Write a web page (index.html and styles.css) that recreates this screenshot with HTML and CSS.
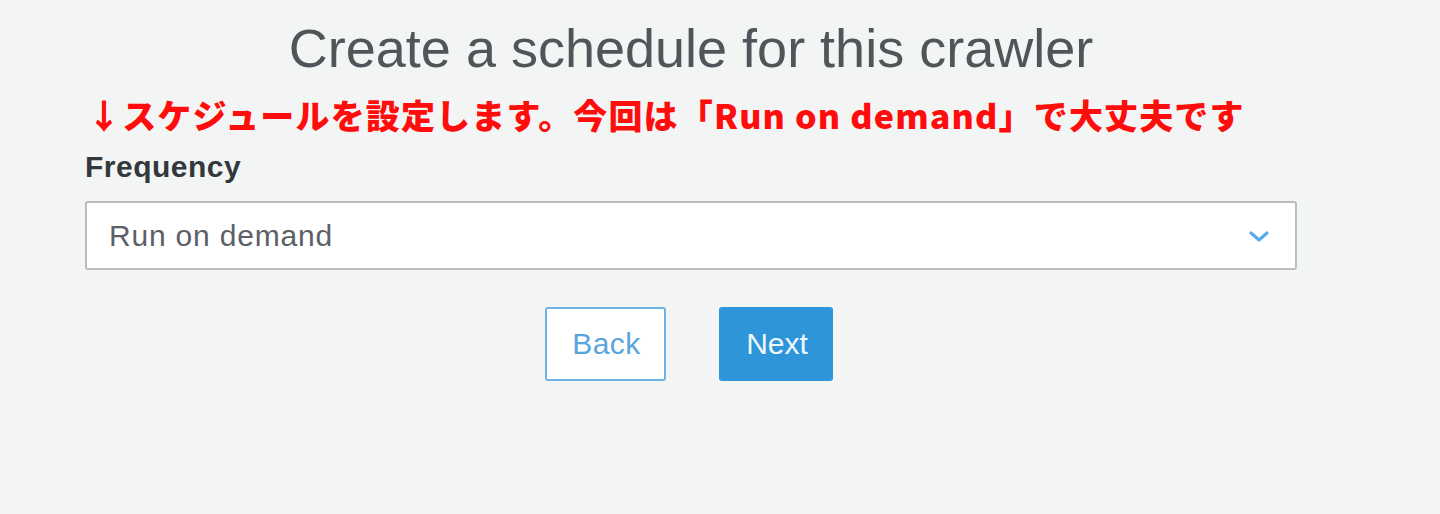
FILE: index.html
```html
<!DOCTYPE html>
<html lang="ja">
<head>
<meta charset="utf-8">
<title>Create a schedule for this crawler</title>
<link rel="stylesheet" href="styles.css">
</head>
<body>
<main class="page">
  <h1 class="title">Create a schedule for this crawler</h1>
  <p class="note">↓スケジュールを設定します。今回は「Run on demand」で大丈夫です</p>
  <label class="label" for="freq">Frequency</label>
  <div class="select">
    <span class="select-value">Run on demand</span>
    <svg class="chevron" width="24" height="16" viewBox="0 0 24 16" aria-hidden="true">
      <path d="M4 5 L12 12 L20 5" fill="none" stroke="#5aade6" stroke-width="3.2" stroke-linecap="round" stroke-linejoin="round"/>
    </svg>
  </div>
  <div class="actions">
    <button class="btn btn-back" type="button">Back</button>
    <button class="btn btn-next" type="button">Next</button>
  </div>
</main>
</body>
</html>
```

FILE: styles.css
```css
html, body {
  margin: 0;
  padding: 0;
}
body {
  background: #f3f5f5;
  font-family: "Liberation Sans", Arial, sans-serif;
  width: 1440px;
  height: 514px;
  overflow: hidden;
}
.page {
  width: 1212px;
  margin-left: 85px;
  padding-top: 16px;
  display: flex;
  flex-direction: column;
}
.title {
  margin: 0;
  font-size: 54px;
  line-height: 64px;
  font-weight: 400;
  color: #50555a;
  text-align: center;
}
.note {
  margin: 18px 0 0 2px;
  font-family: "Noto Sans CJK JP", "Liberation Sans", sans-serif;
  font-weight: 900;
  font-size: 34px;
  line-height: 34px;
  height: 34px;
  color: #ff0d0d;
  white-space: nowrap;
  letter-spacing: 1.15px;
}
.label {
  margin-top: 17px;
  font-weight: 700;
  font-size: 30px;
  line-height: 36px;
  color: #33383d;
  letter-spacing: 0.5px;
}
.select {
  margin-top: 16px;
  height: 69px;
  box-sizing: border-box;
  border: 2px solid #b9bdc0;
  border-radius: 3px;
  background: #ffffff;
  display: flex;
  align-items: center;
  justify-content: space-between;
  padding: 0 24px 0 22px;
}
.select-value {
  font-size: 30px;
  color: #5b6066;
  letter-spacing: 0.8px;
}
.chevron {
  display: block;
}
.actions {
  margin-top: 37px;
  display: flex;
  justify-content: center;
  gap: 53px;
  padding-right: 4px;
}
.btn {
  font-family: "Liberation Sans", Arial, sans-serif;
  font-size: 30px;
  height: 74px;
  border-radius: 3px;
  box-sizing: border-box;
  padding: 0 0 0 2px;
  cursor: pointer;
}
.btn-back {
  width: 121px;
  background: #ffffff;
  border: 2px solid #6db3e6;
  color: #5aa5de;
  letter-spacing: 0.5px;
}
.btn-next {
  width: 114px;
  background: #2e96d8;
  border: 2px solid #2e96d8;
  color: #eef6fc;
}
```
